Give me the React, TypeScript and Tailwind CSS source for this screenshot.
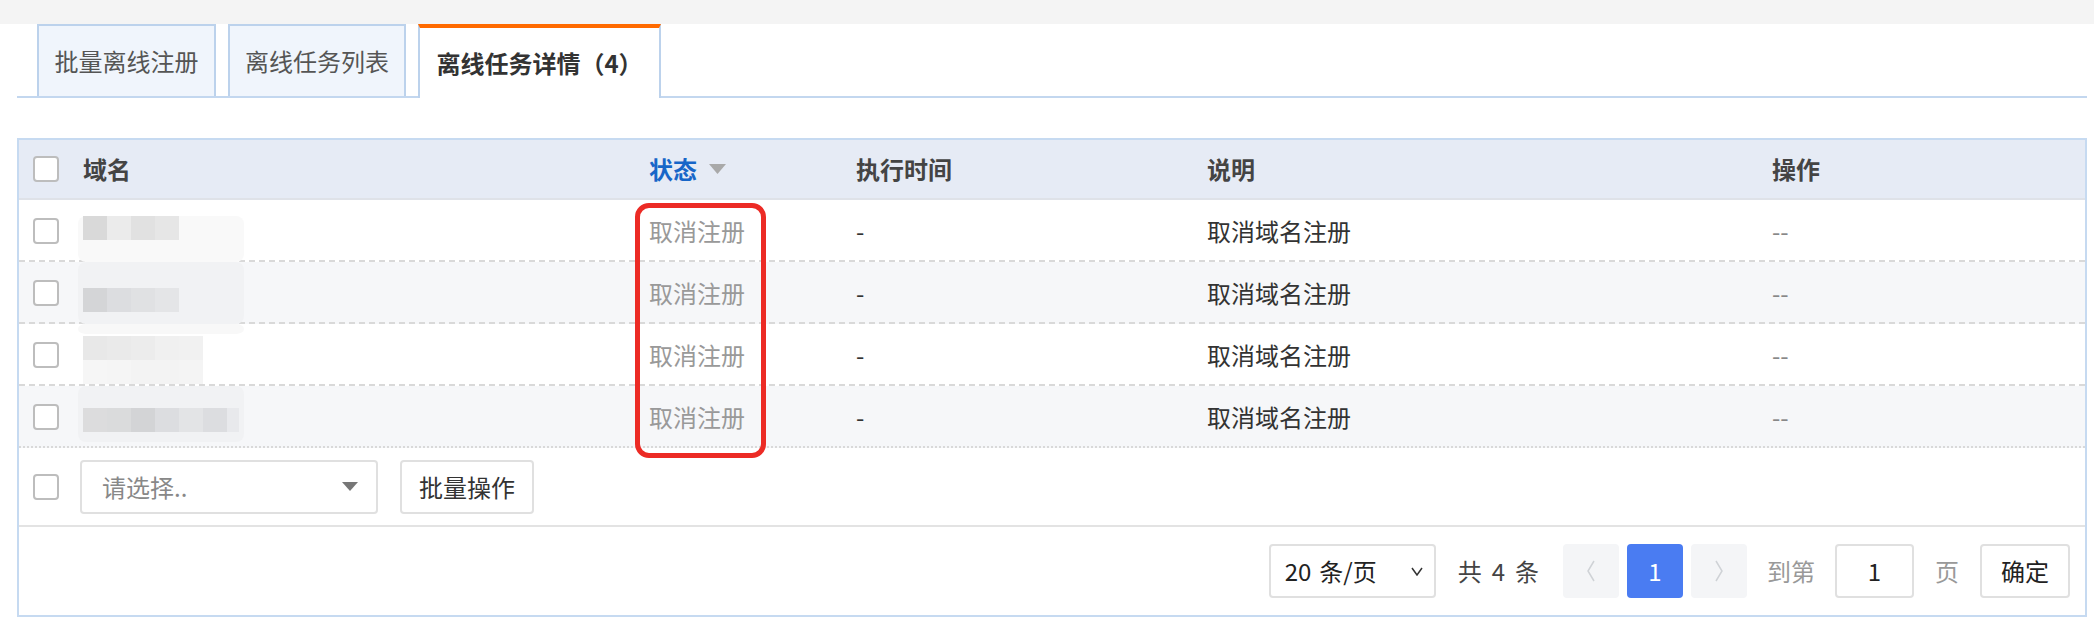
import React from "react";

type Cell = [number, number, number, number, string]; // x, y, w, h, fill

// pixelated (masked) domain names, one block set per row
const masks: Cell[][] = [
  [
    [0, 16, 166, 46, "#f9f9f9"],
    [5, 16, 24, 24, "#d9d9d9"],
    [29, 16, 24, 24, "#ebebeb"],
    [53, 16, 24, 24, "#e1e1e1"],
    [77, 16, 24, 24, "#e6e6e6"],
  ],
  [
    [0, 0, 166, 62, "#f1f2f4"],
    [5, 26, 24, 24, "#d4d5d7"],
    [29, 26, 24, 24, "#dcdde0"],
    [53, 26, 24, 24, "#e0e1e3"],
    [77, 26, 24, 24, "#e4e5e7"],
  ],
  [
    [0, 0, 166, 10, "#f8f8f8"],
    [5, 12, 24, 24, "#e8e8e8"],
    [29, 12, 24, 24, "#eaeaea"],
    [53, 12, 24, 24, "#ececec"],
    [77, 12, 24, 24, "#f0f0f0"],
    [101, 12, 24, 24, "#f1f1f1"],
    [5, 36, 24, 24, "#f6f6f6"],
    [29, 36, 24, 24, "#f5f5f5"],
    [53, 36, 24, 24, "#f3f3f3"],
    [77, 36, 24, 24, "#f3f3f3"],
    [101, 36, 24, 24, "#f4f4f4"],
  ],
  [
    [0, 0, 166, 56, "#f1f2f4"],
    [5, 22, 24, 24, "#dcdcdd"],
    [29, 22, 24, 24, "#dadbdc"],
    [53, 22, 24, 24, "#d3d4d6"],
    [77, 22, 24, 24, "#dcdde0"],
    [101, 22, 24, 24, "#e3e4e6"],
    [125, 22, 24, 24, "#dcdde0"],
    [149, 22, 12, 24, "#e8e9ec"],
  ],
];

const rows = [
  { status: "取消注册", time: "-", desc: "取消域名注册", op: "--" },
  { status: "取消注册", time: "-", desc: "取消域名注册", op: "--" },
  { status: "取消注册", time: "-", desc: "取消域名注册", op: "--" },
  { status: "取消注册", time: "-", desc: "取消域名注册", op: "--" },
];

const cols = "grid grid-cols-[64px_566px_207px_351px_565px_1fr] items-center";

function Checkbox() {
  return <div className="w-[26px] h-[26px] rounded-[4px] border-2 border-[#bdbdbd] bg-white" />;
}

function Mask({ cells }: { cells: Cell[] }) {
  return (
    <svg width="170" height="62" viewBox="0 0 170 62" className="block">
      {cells.map(([x, y, w, h, fill], i) => (
        <rect key={i} x={x} y={y} width={w} height={h} fill={fill} rx={i === 0 ? 8 : 0} />
      ))}
    </svg>
  );
}

function Tab({ label, active, w }: { label: string; active?: boolean; w: string }) {
  if (active) {
    return (
      <div
        className={`${w} h-[74px] -mb-[2px] flex items-center justify-center bg-white border-t-4 border-x-2 border-t-[#ff6a00] border-x-[#bcd2ec] text-[24px] font-bold text-[#333]`}
      >
        {label}
      </div>
    );
  }
  return (
    <div
      className={`${w} h-[72px] flex items-center justify-center bg-[#f0f5fc] border-2 border-b-0 border-[#bcd2ec] text-[24px] text-[#555]`}
    >
      {label}
    </div>
  );
}

export default function App() {
  return (
    <div className="w-[2094px] h-[628px] bg-white font-['Noto_Sans_CJK_SC',sans-serif] text-[#333] overflow-hidden">
      <div className="h-[24px] bg-[#f4f4f4]" />

      <div className="ml-[17px] mr-[7px]">
        {/* tabs */}
        <div className="flex items-end gap-[12px] h-[74px] pl-[20px] border-b-2 border-[#c3d7ef]">
          <Tab label="批量离线注册" w="w-[179px]" />
          <Tab label="离线任务列表" w="w-[178px]" />
          <Tab label="离线任务详情（4）" w="w-[243px]" active />
        </div>

        {/* task table */}
        <div className="relative mt-[40px] border-2 border-[#c6daf1]">
          <div className={`${cols} h-[60px] bg-[#e6ebf5] border-b-2 border-[#dfe2e8] text-[24px] font-bold text-[#444]`}>
            <div className="pl-[14px]">
              <Checkbox />
            </div>
            <div>域名</div>
            <div className="flex items-center gap-[12px] text-[#1766c8]">
              状态
              <svg width="17" height="10" viewBox="0 0 17 10">
                <path d="M0 0h17L8.5 10z" fill="#a9a9a9" />
              </svg>
            </div>
            <div>执行时间</div>
            <div>说明</div>
            <div>操作</div>
          </div>

          {rows.map((r, i) => (
            <div
              key={i}
              className={`${cols} h-[62px] text-[24px] border-b-2 ${
                i === rows.length - 1 ? "border-dotted" : "border-dashed"
              } border-[#d9d9d9] ${i % 2 === 1 ? "bg-[#f6f7f9]" : "bg-white"}`}
            >
              <div className="pl-[14px]">
                <Checkbox />
              </div>
              <div className="-ml-[5px] h-full">
                <Mask cells={masks[i]} />
              </div>
              <div className="text-[#999]">{r.status}</div>
              <div>{r.time}</div>
              <div>{r.desc}</div>
              <div className="text-[#888]">{r.op}</div>
            </div>
          ))}

          {/* batch actions */}
          <div className="flex items-center h-[79px] pl-[14px] border-b-2 border-[#e3e3e3]">
            <Checkbox />
            <div className="ml-[21px] w-[298px] h-[54px] flex items-center justify-between pl-[20px] pr-[18px] border-2 border-[#e0e0e0] rounded-[4px] text-[24px] text-[#888]">
              请选择..
              <svg width="16" height="9" viewBox="0 0 16 9">
                <path d="M0 0h16L8 9z" fill="#777" />
              </svg>
            </div>
            <div className="ml-[22px] w-[134px] h-[54px] flex items-center justify-center border-2 border-[#e0e0e0] rounded-[4px] text-[24px]">
              批量操作
            </div>
          </div>

          {/* pager */}
          <div className="flex items-center justify-end h-[88px] pr-[15px] text-[24px]">
            <div className="w-[167px] h-[54px] flex items-center justify-between pl-[14px] pr-[11px] border-2 border-[#e0e0e0] rounded-[4px] text-[#222]">
              <span className="flex gap-[8px]">
                <span>20</span>
                <span>条/页</span>
              </span>
              <svg width="12" height="9" viewBox="0 0 12 9" fill="none" stroke="#333" strokeWidth="1.5">
                <path d="M1 1l5 7 5-7" />
              </svg>
            </div>
            <div className="ml-[22px] flex gap-[10px] text-[#444]">
              <span>共</span>
              <span>4</span>
              <span>条</span>
            </div>
            <div className="ml-[24px] w-[56px] h-[54px] flex items-center justify-center bg-[#f4f5f7] rounded-[4px]">
              <svg width="10" height="22" viewBox="0 0 10 22" fill="none" stroke="#cfd2d6" strokeWidth="1.5">
                <path d="M8 1L2 11l6 10" />
              </svg>
            </div>
            <div className="ml-[8px] w-[56px] h-[54px] flex items-center justify-center bg-[#4a7cf2] rounded-[4px] text-white">
              1
            </div>
            <div className="ml-[8px] w-[56px] h-[54px] flex items-center justify-center bg-[#f4f5f7] rounded-[4px]">
              <svg width="10" height="22" viewBox="0 0 10 22" fill="none" stroke="#cfd2d6" strokeWidth="1.5">
                <path d="M2 1l6 10-6 10" />
              </svg>
            </div>
            <div className="ml-[20px] text-[#999]">到第</div>
            <div className="ml-[20px] w-[79px] h-[54px] flex items-center justify-center border-2 border-[#e0e0e0] rounded-[4px] text-[#222]">
              1
            </div>
            <div className="ml-[21px] text-[#999]">页</div>
            <div className="ml-[21px] w-[90px] h-[54px] flex items-center justify-center border-2 border-[#e0e0e0] rounded-[4px] text-[#222]">
              确定
            </div>
          </div>

          {/* highlight around the status column */}
          <div className="absolute left-[616px] top-[63px] w-[131px] h-[255px] border-[5px] border-[#ec2b25] rounded-[14px] pointer-events-none" />
        </div>
      </div>
    </div>
  );
}
